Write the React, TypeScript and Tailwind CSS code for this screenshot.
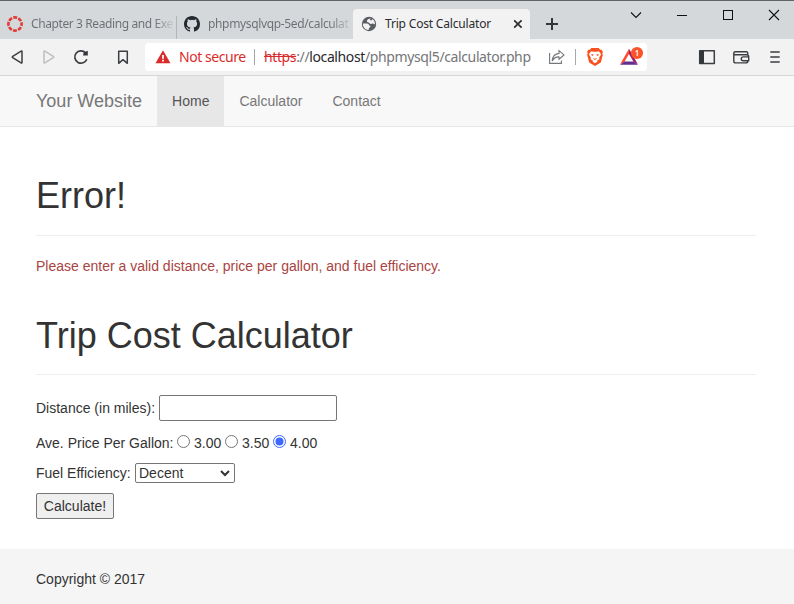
import type { ReactNode } from "react";

const tabFont = "font-['Segoe_UI','Noto_Sans',sans-serif]";

function Favicon({ children, className = "" }: { children: ReactNode; className?: string }) {
  return (
    <svg width="16" height="16" viewBox="0 0 16 16" className={`block shrink-0 ${className}`}>
      {children}
    </svg>
  );
}

function TabStrip() {
  return (
    <div className={`flex h-[39px] border-t border-[#616266] bg-[#d4d8db] text-[12px] ${tabFont}`}>
      <div className="flex h-[38px] w-[177px] shrink-0 items-start pl-[7px] pt-[15px]">
        <Favicon>
          <circle cx="8" cy="8" r="6.6" fill="none" stroke="#e23a35" strokeWidth="2.6" strokeDasharray="3.9 1.284" strokeDashoffset="1.95" />
        </Favicon>
        <div className="ml-2 h-4 w-[145px] whitespace-nowrap bg-gradient-to-r from-[#6b6e72] from-85% to-transparent to-100% bg-clip-text leading-4 tracking-[-0.4px] text-transparent">
          Chapter 3 Reading and Exe
        </div>
        <div className="h-[23px] w-px bg-[#b2b6b9]" />
      </div>
      <div className="flex h-[38px] w-[176px] shrink-0 items-start pl-[7px] pt-[15px]">
        <Favicon>
          <path
            fill="#24292f"
            d="M8 0C3.58 0 0 3.58 0 8c0 3.54 2.29 6.53 5.47 7.59.4.07.55-.17.55-.38 0-.19-.01-.82-.01-1.49-2.01.37-2.53-.49-2.69-.94-.09-.23-.48-.94-.82-1.13-.28-.15-.68-.52-.01-.53.63-.01 1.08.58 1.23.82.72 1.21 1.87.87 2.33.66.07-.52.28-.87.51-1.07-1.78-.2-3.64-.89-3.64-3.95 0-.87.31-1.59.82-2.15-.08-.2-.36-1.02.08-2.12 0 0 .67-.21 2.2.82a7.4 7.4 0 0 1 4 0c1.53-1.04 2.2-.82 2.2-.82.44 1.1.16 1.92.08 2.12.51.56.82 1.27.82 2.15 0 3.07-1.87 3.75-3.65 3.95.29.25.54.73.54 1.48 0 1.07-.01 1.93-.01 2.2 0 .21.15.46.55.38A8 8 0 0 0 16 8c0-4.42-3.58-8-8-8z"
          />
        </Favicon>
        <div className="ml-2 h-4 w-[145px] whitespace-nowrap bg-gradient-to-r from-[#6b6e72] from-85% to-transparent to-100% bg-clip-text leading-4 tracking-[-0.35px] text-transparent">
          phpmysqlvqp-5ed/calculat
        </div>
      </div>
      <div className="mt-2 flex h-[30px] w-[177px] shrink-0 items-start rounded-t-[4px] bg-[#f2f2f2] pl-2 pt-[7px]">
        <Favicon>
          <circle cx="8" cy="8" r="7.2" fill="#5a5e63" />
          <path d="M9.6 2.2C7.8 2.6 5.9 3.6 5.9 5c0 1.3 1.3 1.5 2.2 1.8.6.2.6 1.1 1.5 1.2 1.1.1 1.2-.7 2.3-.5.9.1 1.2.8 2.2.8A6.1 6.1 0 0 0 11.6 3.1L10.8 4.3H8.9z" fill="#f2f2f2" />
          <path d="M1.8 7.6h4.1c1.3 0 2.1.8 2.1 1.7 1 .1 1.6.7 1.4 1.5-.2.9-1.3.7-1.5 1.6-.1.7.1 1.1-.6 1.7A6.2 6.2 0 0 1 1.8 7.6z" fill="#f2f2f2" />
        </Favicon>
        <div className="ml-2 w-[127px] whitespace-nowrap leading-4 tracking-[-0.18px] text-[#2a2c2f]">Trip Cost Calculator</div>
        <svg width="12" height="16" viewBox="0 0 12 16" className="block">
          <path d="M2.2 4.3l7.4 7.4M9.6 4.3l-7.4 7.4" stroke="#2b2d30" strokeWidth="1.7" />
        </svg>
      </div>
      <svg width="44" height="38" viewBox="530 1 44 38" className="block shrink-0">
        <path d="M546 24h12M552 18v12" stroke="#33363a" strokeWidth="2" />
      </svg>
      <svg width="220" height="38" viewBox="574 1 220 38" className="block shrink-0" fill="none" stroke="#111">
        <path d="M631 12.5l5 5 5-5" strokeWidth="1.1" />
        <path d="M677 15.5h10M723.5 10.5h9v9h-9z" shapeRendering="crispEdges" />
        <path d="M769 10l10 10M779 10l-10 10" strokeWidth="1.1" />
      </svg>
    </div>
  );
}

function ToolIcon({ children, className = "w-8" }: { children: ReactNode; className?: string }) {
  return (
    <div className={`flex shrink-0 items-center justify-center ${className}`}>
      <svg width="20" height="20" viewBox="0 0 20 20" fill="none" stroke="#3b3e42" strokeWidth="1.5" strokeLinejoin="round" className="block">
        {children}
      </svg>
    </div>
  );
}

function Toolbar() {
  return (
    <div className="flex h-[37px] items-center border-b border-[#d4d6d8] bg-[#f2f2f2] pl-px">
      <ToolIcon>
        <path d="M15 4.6v10.8q0 1-.9.4L5.7 10.6q-.8-.6 0-1.2L14.1 4.2q.9-.6.9.4z" />
      </ToolIcon>
      <ToolIcon>
        <path d="M5 4.6v10.8q0 1 .9.4l8.4-5.2q.8-.6 0-1.2L5.9 4.2q-.9-.6-.9.4z" stroke="#bdbfc1" />
      </ToolIcon>
      <ToolIcon>
        <path d="M15.8 12.2A6.2 6.2 0 1 1 14.4 5.6" strokeWidth="1.7" />
        <path d="M12 8.5h4.8V3.7L14.5 4.7 12.8 5.2z" fill="#33363a" stroke="none" />
      </ToolIcon>
      <ToolIcon className="ml-[10px] w-8">
        <path d="M5.7 4.3h8.6v12L10 12.7l-4.3 3.6z" />
      </ToolIcon>
      <div className={`ml-[6px] flex h-7 w-[502px] shrink-0 items-center rounded bg-white text-[14px] leading-5 ${tabFont}`}>
        <svg width="16" height="16" viewBox="0 0 16 16" className="ml-[10px] block shrink-0">
          <path d="M8 1.2l7.5 13H.5z" fill="#d92b2b" />
          <path d="M7.1 5.9h1.8v3.8H7.1zM7.1 10.8h1.8v1.8H7.1z" fill="#fff" />
        </svg>
        <span className="ml-2 w-[75px] shrink-0 whitespace-nowrap tracking-[-0.45px] text-[#d92b2b]">Not secure</span>
        <span className="h-4 w-px shrink-0 bg-[#a8a8a8]" />
        <span className="ml-[9px] w-[285px] shrink-0 whitespace-nowrap tracking-[-0.38px] text-[#747679]">
          <span className="text-[#d92b2b] line-through decoration-[#d92b2b]">https</span>://
          <span className="text-[#27292c]">localhost</span>/phpmysql5/calculator.php
        </span>
        <svg width="16" height="16" viewBox="0 0 16 16" className="block shrink-0" fill="none" stroke="#75787c" strokeWidth="1.1">
          <path d="M.6 4v10.4h11.8v-3M10 1.7l5 4.2-5 4.3V7.9C6.5 7.7 4.7 9.3 3.2 12c.3-4 2.5-7.2 6.8-7.6z" />
        </svg>
        <span className="ml-[10px] h-4 w-px shrink-0 bg-[#a8a8a8]" />
        <svg width="16" height="18" viewBox="0 0 16 18" className="ml-[11px] block shrink-0">
          <path d="M4.4 0h7.2l1.5 1.8 1.5-.1 1.3 2.4-.6 1.3.5 1.7-2 7.3L8 18l-5.8-3.6-2-7.3.5-1.7L.1 4.1l1.3-2.4 1.5.1z" fill="#f9501e" />
          <path d="M4.2 3.2l2.1.6h3.4l2.1-.6 2.2 2.9-.6 1.7-1.3 1.8.4 1.5-1.8 1.5-1-.4.8 1.3L8 15.2l-2.5-1.7.8-1.3-1 .4-1.8-1.5.4-1.5-1.3-1.8L2 6.1z" fill="#fff" />
          <path d="M4.2 5.9l2.5.7-.9 1.3-1.3-.6zM11.8 5.9l-2.5.7.9 1.3 1.3-.6zM6.3 9.7L8 10.9l1.7-1.2-.4 1.6L8 12.1l-1.3-.8z" fill="#f9501e" />
        </svg>
        <svg width="26" height="22" viewBox="619 46 26 22" className="ml-4 block shrink-0">
          <path d="M629 48.8l-9 15.7 4.3-2.4L629 54z" fill="#ff4b31" />
          <path d="M629 48.8l9 15.7-4.3-2.4L629 54z" fill="#9e1f63" />
          <path d="M620 64.7h18l-4.5-3.3h-9z" fill="#662d91" />
          <circle cx="637" cy="53" r="6.1" fill="#fb542b" />
          <text x="637" y="56" fontSize="8" fontWeight="600" fontFamily="Open Sans" textAnchor="middle" fill="#fff">1</text>
        </svg>
      </div>
      <ToolIcon className="ml-[43px] w-[34px]">
        <path d="M2.7 3.7h14.6v12.8H2.7z" />
        <path d="M2.7 3.7H7v12.8H2.7z" fill="#33363a" stroke="none" />
      </ToolIcon>
      <ToolIcon className="w-[34px]">
        <path d="M16.7 7.2V6.1q0-1.3-1.4-1.3H4.4q-1.6 0-1.6 1.3v7.8q0 2 2 2h10q2 0 2-2v-.8M2.8 6.5q0 1.2 1.8 1.2h11.1q2 0 2 2v4.3M17.7 9.9h-5.5a1.8 1.8 0 0 0 0 3.9h5.5z" strokeWidth="1.4" />
      </ToolIcon>
      <ToolIcon className="w-[34px]">
        <path d="M5.3 5h9.4M5.3 10h9.4M5.3 15h9.4" />
      </ToolIcon>
    </div>
  );
}

function PageHeader({ title, className = "h-[39px]" }: { title: string; className?: string }) {
  return (
    <div className="mb-5 mt-10 border-b border-[#eee] pb-[19px]">
      <h1 className={`text-[36px] font-normal leading-[39px] text-[#333] ${className}`}>{title}</h1>
    </div>
  );
}

function Radio({ label, checked = false }: { label: string; checked?: boolean }) {
  return (
    <label className="flex w-12 shrink-0 whitespace-nowrap">
      <svg width="13" height="13" viewBox="0 0 13 13" className="mr-1 mt-[2px] block shrink-0">
        <circle cx="6.5" cy="6.5" r="6" fill="#fff" stroke={checked ? "#3e68ff" : "#767676"} />
        {checked && <circle cx="6.5" cy="6.5" r="4" fill="#3e68ff" />}
      </svg>
      {label}
    </label>
  );
}

export default function App() {
  return (
    <div className="flex h-[604px] w-[794px] flex-col overflow-hidden bg-white font-['Liberation_Sans',Arial,sans-serif] text-[14px] leading-5 text-[#333]">
      <TabStrip />
      <Toolbar />
      <nav className="flex h-[51px] shrink-0 border-b border-[#e7e7e7] bg-[#f8f8f8] pl-[21px] text-[#777]">
        <a className="px-[15px] py-[15px] text-[18px]">Your Website</a>
        <a className="bg-[#e7e7e7] p-[15px] text-[#555]">Home</a>
        <a className="p-[15px]">Calculator</a>
        <a className="p-[15px]">Contact</a>
      </nav>
      <main className="flex h-[422px] shrink-0 flex-col px-9 pr-[38px] pt-[9px]">
        <PageHeader title="Error!" className="h-10" />
        <p className="text-[#a94442]">Please enter a valid distance, price per gallon, and fuel efficiency.</p>
        <PageHeader title="Trip Cost Calculator" />
        <div className="flex h-[26px] items-center">
          <span className="w-[123px] shrink-0 whitespace-nowrap">Distance (in miles):</span>
          <input className="h-[26px] w-[178px] rounded-[2px] border border-[#767676] bg-white" />
        </div>
        <div className="mt-3 flex h-5">
          <span className="w-[141px] shrink-0 whitespace-nowrap">Ave. Price Per Gallon:</span>
          <Radio label="3.00" />
          <Radio label="3.50" />
          <Radio label="4.00" checked />
        </div>
        <div className="mt-[10px] flex h-5">
          <span className="w-[99px] shrink-0 whitespace-nowrap">Fuel Efficiency:</span>
          <div className="flex h-5 w-[100px] items-center justify-between rounded-[2px] border border-[#767676] bg-white pl-[3px] pr-[3px]">
            <span>Decent</span>
            <svg width="12" height="12" viewBox="0 0 12 12" className="block">
              <path d="M2 4l4 4 4-4" fill="none" stroke="#333" strokeWidth="2" />
            </svg>
          </div>
        </div>
        <button className="mt-[10px] h-[26px] w-[78px] rounded-[2px] border border-[#767676] bg-[#efefef]">Calculate!</button>
      </main>
      <footer className="h-[55px] shrink-0 bg-[#f5f5f5] pl-9 pt-5">Copyright © 2017</footer>
    </div>
  );
}
